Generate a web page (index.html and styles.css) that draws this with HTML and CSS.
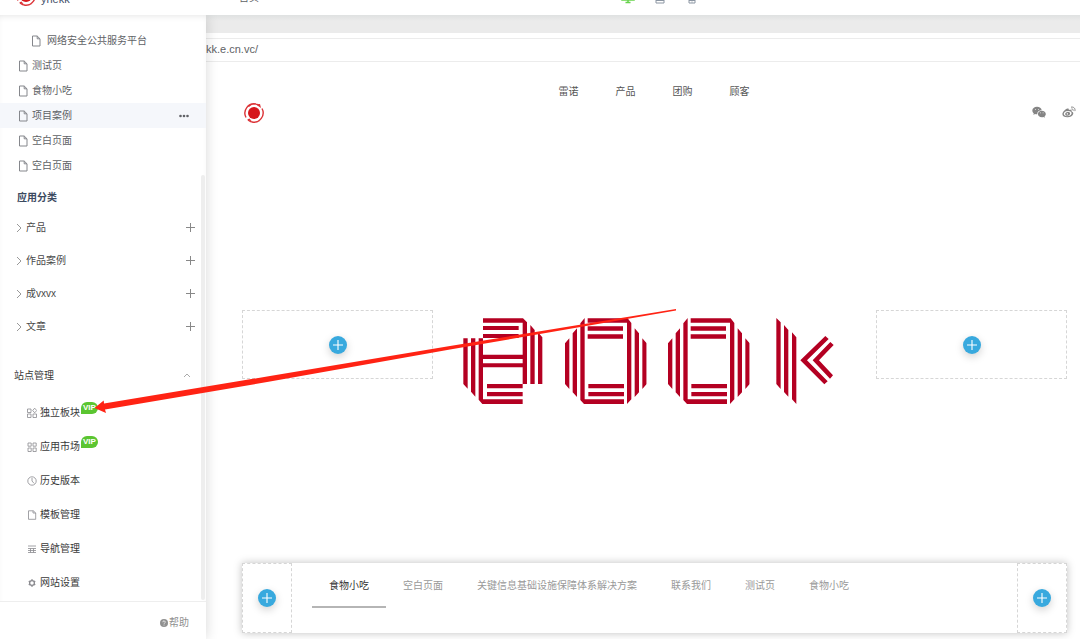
FILE: index.html
```html
<!DOCTYPE html>
<html lang="zh-CN">
<head>
<meta charset="utf-8">
<title>项目案例</title>
<link rel="stylesheet" href="styles.css">
</head>
<body>
<svg class="defs" aria-hidden="true">
  <symbol id="file" viewBox="0 0 10 12"><path d="M1.500 1h4.700l2.800 2.800V11H1.500zM6.200 1v2.800H9" fill="none" stroke="currentColor"/></symbol>
  <symbol id="chevron" viewBox="0 0 6 10"><path d="M1 1l4 4-4 4" fill="none" stroke="currentColor"/></symbol>
  <symbol id="plus" viewBox="0 0 9 9"><path d="M4.500 0v9M0 4.500h9" stroke="currentColor"/></symbol>
  <symbol id="brand" viewBox="0 0 22 22">
    <circle cx="11" cy="11" r="6" fill="#d6171c"/>
    <path d="M3 15.500A9.300 9.300 0 0 1 13 2M19 6.500A9.300 9.300 0 0 1 9 20M5.500 4.500A9 9 0 0 1 16.500 3.500M16.500 18.500A9 9 0 0 1 5 18" fill="none" stroke="#dc3337" stroke-width="1.400"/>
    <path d="M13 2.500l4-.5 1 4zM9 19.500l-5-2 2.500-1z" fill="#dc3337"/>
  </symbol>
  <symbol id="ring-letter" viewBox="345 54 245 258">
    <path d="M345 130l13-15v152l-13-15zM368 100l13-15v206l-13-14zM391 70l13-16v244h118v14H402l-11-12zM415 252h107v13H415zM415 276h107v13H415zM413 55h120l11 14v229l-13 14V68H413zM413 79h106v13H413zM413 103h106v13H413zM554 85l13 15v177l-13 14zM577 115l13 15v122l-13 15z"/>
  </symbol>
</svg>

<header class="topbar">
  <div class="topbar-row">
    <div class="account"><svg class="brand"><use href="#brand"/></svg><span>yhekk</span></div>
    <span class="page-name">首页</span>
    <div class="devices">
      <svg class="device active" viewBox="0 0 14 14"><path d="M1 2h12v8H1zM7 10v3M4.500 12.500h5M1 9.500h12" fill="none" stroke="currentColor" stroke-width="1.500"/></svg>
      <svg class="device" viewBox="0 0 14 14"><path d="M3 1h8v12H3zM3 10.500h8" fill="none" stroke="currentColor"/></svg>
      <svg class="device" viewBox="0 0 14 14"><path d="M4 1h6v12H4zM4 10.500h6M6.500 12h1" fill="none" stroke="currentColor"/></svg>
    </div>
  </div>
</header>

<div class="workspace">
  <aside class="sidebar">
    <div class="side-body">
      <ul class="pages">
        <li class="page nested"><svg class="file"><use href="#file"/></svg>网络安全公共服务平台</li>
        <li class="page"><svg class="file"><use href="#file"/></svg>测试页</li>
        <li class="page"><svg class="file"><use href="#file"/></svg>食物小吃</li>
        <li class="page current"><svg class="file"><use href="#file"/></svg>项目案例
          <button class="more" aria-label="更多"><svg viewBox="0 0 10 4"><circle cx="1.500" cy="2" r="1.300"/><circle cx="5" cy="2" r="1.300"/><circle cx="8.500" cy="2" r="1.300"/></svg></button></li>
        <li class="page"><svg class="file"><use href="#file"/></svg>空白页面</li>
        <li class="page"><svg class="file"><use href="#file"/></svg>空白页面</li>
      </ul>
      <h2 class="side-title">应用分类</h2>
      <ul class="groups">
        <li class="group"><svg class="chevron"><use href="#chevron"/></svg>产品<button class="add" aria-label="添加"><svg><use href="#plus"/></svg></button></li>
        <li class="group"><svg class="chevron"><use href="#chevron"/></svg>作品案例<button class="add" aria-label="添加"><svg><use href="#plus"/></svg></button></li>
        <li class="group"><svg class="chevron"><use href="#chevron"/></svg>成vxvx<button class="add" aria-label="添加"><svg><use href="#plus"/></svg></button></li>
        <li class="group"><svg class="chevron"><use href="#chevron"/></svg>文章<button class="add" aria-label="添加"><svg><use href="#plus"/></svg></button></li>
      </ul>
      <button class="manage-title">站点管理<svg viewBox="0 0 8 5"><path d="M1 4l3-3 3 3" fill="none" stroke="currentColor"/></svg></button>
      <ul class="manage">
        <li><a href="#"><svg viewBox="0 0 10 10"><path d="M.5 1h3.500v3.500H.5zM.5 6h3.500v3.500H.5zM6 6h3.500v3.500H6zM7.700.2l2 2.300-2 2.300-2-2.300z"/></svg>独立板块<span class="vip">VIP</span></a></li>
        <li><a href="#"><svg viewBox="0 0 10 10"><path d="M1 1h3.200v3.200H1zM1 6h3.200v3.500H1zM6 6h3.200v3.500H6zM6 1h3.200v3.200H6z"/></svg>应用市场<span class="vip">VIP</span></a></li>
        <li><a href="#"><svg viewBox="0 0 10 10"><circle cx="5" cy="5" r="4.200"/><path d="M5 2v3l2 2.300"/></svg>历史版本</a></li>
        <li><a href="#"><svg viewBox="0 0 10 10"><path d="M1.500.8h4.800L8.700 3v6.300H1.500zM6 .8V3h2.700"/></svg>模板管理</a></li>
        <li><a href="#"><svg viewBox="0 0 10 10"><path d="M1 2h8M1 4.500h8M1 6.500h8M1 8.500h8M3.500 4.500v4M6.500 4.500v4"/></svg>导航管理</a></li>
        <li><a href="#"><svg viewBox="0 0 10 10"><circle cx="5" cy="5" r="2.400" stroke-width="1.300"/><path d="M5 1.200v1.400M5 7.400v1.400M1.800 3.200l1 .6M7.200 6.200l1 .6M1.800 6.800l1-.6M7.200 3.800l1-.6" stroke-width="1.500"/></svg>网站设置</a></li>
      </ul>
      <div class="scrollbar"></div>
    </div>
    <footer class="side-foot"><a href="#" class="help"><svg viewBox="0 0 8 8"><circle cx="4" cy="4" r="4" fill="currentColor"/><path d="M2.800 3.200a1.200 1.200 0 1 1 1.700 1L4 4.700M4 5.600v.9" fill="none" stroke="#fff" stroke-width=".8"/></svg>帮助</a></footer>
  </aside>

  <main class="stage">
    <div class="band"></div>
    <div class="address">kk.e.cn.vc/</div>
    <div class="site-head">
      <svg class="brand"><use href="#brand"/></svg>
      <nav class="site-nav"><a href="#">雷诺</a><a href="#">产品</a><a href="#">团购</a><a href="#">顾客</a></nav>
      <div class="social">
        <svg viewBox="0 0 14 12"><path fill-rule="evenodd" d="M5 .8c2.500 0 4.500 1.500 4.700 3.500C7 4.300 5 6 5.300 8.300 4.500 8.400 3.800 8.300 3 8l-1.600.9.400-1.500C-1.300 4.800.8.8 5 .8zM3 3.200v.8h.8v-.8zM6 3.200v.8h.8v-.8z"/><path fill-rule="evenodd" d="M9.800 4.800c2.300 0 4 1.400 4 3.200 0 1-.5 1.800-1.300 2.400l.3 1.300-1.400-.7c-3 .8-5.500-.8-5.500-3 0-1.800 1.600-3.200 3.900-3.200zM8.200 6.500v.8h.8v-.8zM10.700 6.500v.8h.8v-.8z"/></svg>
        <svg viewBox="0 0 14 12"><path fill-rule="evenodd" d="M5.500 2.600c1-.2 1.600.4 1.300 1.500 2-.6 3.200-.2 2.800 1.300 1.500.5 2 1.500 1.500 2.800C10.400 10 8 11.400 5.300 11.300 2.500 11.200.4 10 .4 8.200c0-2 3-5.200 5.100-5.600zM5.600 5C3.300 5.200 1.600 6.500 1.800 8c.2 1.500 2 2.300 4.200 2.100 2.200-.2 3.800-1.600 3.600-3.100C9.400 5.500 7.800 4.800 5.600 5z"/><path fill-rule="evenodd" d="M5.400 5.900c1.500-.2 2.700.6 2.700 1.700S7 9.700 5.600 9.800C4.200 9.900 3.100 9 3.200 7.900c0-1 1-1.900 2.200-2zM4.800 7.200v1.300h1.200V7.200z"/><path d="M9 1.200c2.600-.7 4.600 1.300 3.900 3.900M9.400 3c1.200-.2 2 .5 1.800 1.700" fill="none" stroke="currentColor"/></svg>
      </div>
    </div>

    <section class="banner">
      <div class="slot"><button class="insert" aria-label="插入"><svg><use href="#plus"/></svg></button></div>
      <svg class="wordmark" viewBox="39 54 1149 258" role="img" aria-label="eook">
        <path d="M40 115h13v151l-13-14zM63 115h13v175l-13-15zM86 115h13V164h119V68H99V55h120l12 12v185h-13v-50H99v96h119v14H97l-11-13zM99 78h107v12H99zM99 102h107v12H99zM111 252h107v13H111zM111 276h107v13H111zM241 75l13 15v162h-13zM264 97l13 15v140h-13z"/>
        <path class="gap" d="M99 177h119v13H99z"/>
        <use href="#ring-letter" x="345" y="54" width="245" height="258"/>
        <use href="#ring-letter" x="654" y="54" width="245" height="258"/>
        <path d="M979 54l13 13v200l-13-15zM1002 75l13 15v200l-13-14zM1026 97l13 15v200l-13-14zM1051 181l75-73 10 9-65 64 62 63-10 9zM1088 181l53-55 10 9-44 46 42 45-9 10z"/>
      </svg>
      <div class="slot"><button class="insert" aria-label="插入"><svg><use href="#plus"/></svg></button></div>
    </section>

    <section class="dock">
      <div class="cell"><button class="insert" aria-label="插入"><svg><use href="#plus"/></svg></button></div>
      <nav class="tabs">
        <a href="#" class="tab selected">食物小吃</a><a href="#" class="tab">空白页面</a><a href="#" class="tab">关键信息基础设施保障体系解决方案</a><a href="#" class="tab">联系我们</a><a href="#" class="tab">测试页</a><a href="#" class="tab">食物小吃</a>
      </nav>
      <div class="cell"><button class="insert" aria-label="插入"><svg><use href="#plus"/></svg></button></div>
    </section>
  </main>
</div>
<svg class="arrow" viewBox="94 308 584 106" aria-hidden="true"><path d="M676 309L450 346 270 376 104 403.500 103.700 400.500 94.500 408 106 413 105 409.500 270 381.500 450 349.500 676 310.500z"/></svg>
</body>
</html>
```
FILE: styles.css
```css
* { box-sizing: border-box; }
body {
  position: relative;
  display: flex;
  flex-direction: column;
  min-height: 100vh;
  margin: 0;
  background: #fff;
  color: #606266;
  font: 10px/16px "Liberation Sans", "Noto Sans CJK SC", sans-serif;
}
ul { margin: 0; padding: 0; list-style: none; }
a { color: inherit; text-decoration: none; }
button { border: 0; padding: 0; background: none; color: inherit; font: inherit; cursor: pointer; }
svg { display: block; flex: none; }
.defs { position: absolute; width: 0; height: 0; }
.brand { width: 22px; height: 22px; }

.topbar {
  position: relative;
  z-index: 3;
  display: flex;
  align-items: flex-end;
  height: 15px;
  overflow: hidden;
  background: #fff;
}
.topbar-row { display: grid; grid-template-columns: 224px 1fr; align-items: center; width: 100%; height: 38px; padding-left: 15px; }
.account { display: flex; align-items: flex-end; gap: 4px; color: #44506a; font-size: 11px; }
.page-name { grid-row: 1; grid-column: 2; padding-top: 4px; }
.devices { grid-row: 1; grid-column: 2; display: flex; gap: 18px; justify-self: center; padding-top: 2px; color: #8c96a3; }
.device { width: 14px; height: 14px; }
.device.active { color: #67d34c; }

.workspace { display: flex; flex: 1; }
.sidebar {
  position: relative;
  z-index: 2;
  display: flex;
  flex-direction: column;
  flex: none;
  width: 206px;
  background: #fff;
  box-shadow: 0 0 12px rgba(0, 0, 0, .16);
}
.side-body { position: relative; flex: 1; padding-top: 13px; box-shadow: inset 0 4px 6px -3px rgba(0, 0, 0, .1); }
.page { display: flex; align-items: center; gap: 4px; height: 25px; padding: 0 17px 0 18px; }
.page.nested { gap: 6px; padding-left: 31px; }
.page.current { background: #f5f7fb; }
.file { width: 10px; height: 12px; color: #85878c; }
.more { margin-left: auto; }
.more svg { width: 10px; height: 4px; fill: #606266; }
.side-title { height: 26px; margin: 7px 0 0; padding-left: 17px; color: #3b4a5f; font-size: 10px; font-weight: 700; line-height: 26px; }
.group { display: flex; align-items: center; height: 33px; padding: 0 11px 0 16px; color: #4a4a4a; }
.chevron { width: 6px; height: 10px; margin-right: 4px; color: #999; }
.add { margin-left: auto; color: #888; }
.add svg { width: 9px; height: 9px; }
.manage-title { display: flex; align-items: center; justify-content: space-between; width: 100%; height: 35px; margin: 15px 0 3px; padding: 0 15px 0 14px; color: #3a3a3a; }
.manage-title svg { width: 8px; height: 5px; color: #aaa; }
.manage a { display: flex; align-items: center; height: 34px; padding-left: 27px; color: #3a3a3a; }
.manage svg { width: 10px; height: 10px; margin-right: 3px; fill: none; stroke: #8a8a8f; stroke-width: .8; }
.vip { margin: 0 0 10px 1px; padding: 0 2px; border-radius: 6px 6px 6px 0; background: #5bc531; color: #fff; font-size: 8px; font-weight: 700; line-height: 12px; }
.scrollbar { position: absolute; top: 160px; right: 1px; bottom: 1px; width: 4px; border-radius: 2px; background: #eee; }
.side-foot { display: flex; justify-content: flex-end; align-items: center; height: 38px; padding: 4px 17px 0 0; border-top: 1px solid #eee; }
.help { display: flex; align-items: center; gap: 1px; color: #909090; }
.help svg { width: 8px; height: 8px; }

.stage { flex: 1; min-width: 0; }
.band { height: 18px; background: linear-gradient(#dfe1e1, #ebebeb 6px); }
.address { height: 24px; margin-top: 5px; border: solid #ececec; border-width: 1px 0; color: #606266; font-size: 11px; line-height: 21px; }
.site-head { display: grid; grid-template-columns: 1fr auto 1fr; padding: 20px 4px 0 37px; }
.site-head .brand { margin-top: 20px; }
.site-nav { display: flex; gap: 37px; padding: 2px 11px 0 0; color: #555; }
.social { display: flex; gap: 16px; justify-self: end; margin-top: 24px; color: #858585; }
.social svg { width: 14px; height: 12px; fill: currentColor; }

.banner { display: grid; grid-template-columns: 191px 1fr 191px; align-items: start; justify-items: center; margin: 186px 13px 0 36px; }
.slot { display: flex; align-items: center; justify-content: center; width: 100%; height: 69px; border: 1px dashed #d6d6d6; }
.insert { display: flex; align-items: center; justify-content: center; width: 18px; height: 18px; border-radius: 50%; background: #38a9de; color: #fff; box-shadow: 0 3px 9px rgba(0, 0, 0, .18); }
.insert svg { width: 10px; height: 10px; }
.wordmark { width: 383px; height: 86px; margin-top: 8px; fill: #b40022; }
.wordmark .gap { fill: #fff; }

.dock { display: flex; height: 70px; margin: 159px 13px 0 36px; background: #fff; box-shadow: 0 0 8px rgba(0, 0, 0, .25); }
.cell { display: flex; align-items: center; justify-content: center; flex: none; width: 50px; border: 1px dashed #d6d6d6; }
.tabs { display: flex; flex: 1; align-items: flex-start; padding-left: 20px; color: #999; }
.tab { height: 45px; padding: 15px 17px 0; white-space: nowrap; }
.tab.selected { border-bottom: 2px solid #b5b5b5; color: #333; }

.arrow { position: absolute; z-index: 4; top: 308px; left: 94px; width: 584px; height: 106px; fill: #ff2314; pointer-events: none; }
```
